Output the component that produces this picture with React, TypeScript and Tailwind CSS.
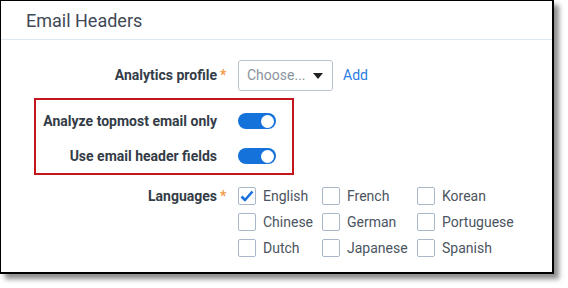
import type { FC } from "react";

const LANGUAGES: { name: string; checked?: boolean }[] = [
  { name: "English", checked: true },
  { name: "French" },
  { name: "Korean" },
  { name: "Chinese" },
  { name: "German" },
  { name: "Portuguese" },
  { name: "Dutch" },
  { name: "Japanese" },
  { name: "Spanish" },
];

const Toggle: FC = () => (
  <span className="flex h-[16px] w-[38px] items-center justify-end rounded-full bg-[#1472da] pr-[2px]">
    <span className="h-[13px] w-[13px] rounded-full bg-white" />
  </span>
);

const Checkbox: FC<{ name: string; checked?: boolean }> = ({ name, checked }) => (
  <label className="flex h-[18px] items-center gap-[7px]">
    <span className="flex h-[18px] w-[18px] items-center justify-center rounded-[2px] border border-[#a8b8ca] bg-white">
      {checked && (
        <svg width="14" height="12" viewBox="0 0 14 12">
          <path d="M1.5 6.5 L5 10 L12.5 1.5" fill="none" stroke="#1a6fdc" strokeWidth="2.6" strokeLinejoin="round" />
        </svg>
      )}
    </span>
    <span className="text-[14px] leading-[18px] text-[#4b5460]">{name}</span>
  </label>
);

export default function App() {
  return (
    <div className="h-[288px] w-[568px] bg-white font-['Roboto',sans-serif]">
      <div className="h-[274px] w-[554px] border border-r-2 border-b-2 border-black bg-white shadow-[5px_5px_5px_rgba(0,0,0,0.45)]">
        <div className="flex h-[39px] items-center border-b border-[#dfe7ef] pl-[25px] text-[18px] text-[#3f4957]">
          Email Headers
        </div>

        <div className="pt-[20px]">
          <div className="flex items-center">
            <span className="w-[216px] text-right text-[14px] font-bold text-[#343c47]">Analytics profile</span>
            <span className="w-[21px] pl-[3px] text-[14px] font-bold text-[#f29a4a]">*</span>
            <div className="flex h-[31px] w-[95px] items-center justify-between rounded-[3px] border border-[#b9c4cf] pl-[8px] pr-[9px] text-[14px] text-[#8a939d]">
              <span>Choose...</span>
              <svg width="10" height="6" viewBox="0 0 10 6">
                <path d="M0 0 H10 L5 6 Z" fill="#222" />
              </svg>
            </div>
            <span className="ml-[10px] text-[14px] text-[#2b7de0]">Add</span>
          </div>

          <div className="ml-[33px] mt-[7px] flex h-[77px] w-[260px] flex-col gap-[19px] border-2 border-[#c4161c] pt-[13px]">
            <div className="flex h-[16px] items-center">
              <span className="w-[181px] text-right text-[14px] font-bold leading-[16px] text-[#343c47]">Analyze topmost email only</span>
              <span className="ml-[21px]">
                <Toggle />
              </span>
            </div>
            <div className="flex h-[16px] items-center">
              <span className="w-[181px] text-right text-[14px] font-bold leading-[16px] text-[#343c47]">Use email header fields</span>
              <span className="ml-[21px]">
                <Toggle />
              </span>
            </div>
          </div>

          <div className="mt-[12px] flex items-start">
            <span className="flex h-[18px] w-[216px] items-center justify-end text-[14px] font-bold leading-[18px] text-[#343c47]">Languages</span>
            <span className="flex h-[18px] w-[21px] items-center pl-[3px] text-[14px] font-bold leading-[18px] text-[#f29a4a]">*</span>
            <div className="grid grid-cols-[84px_95px_auto] gap-y-[8px]">
              {LANGUAGES.map((l) => (
                <Checkbox key={l.name} name={l.name} checked={l.checked} />
              ))}
            </div>
          </div>
        </div>
      </div>
    </div>
  );
}
